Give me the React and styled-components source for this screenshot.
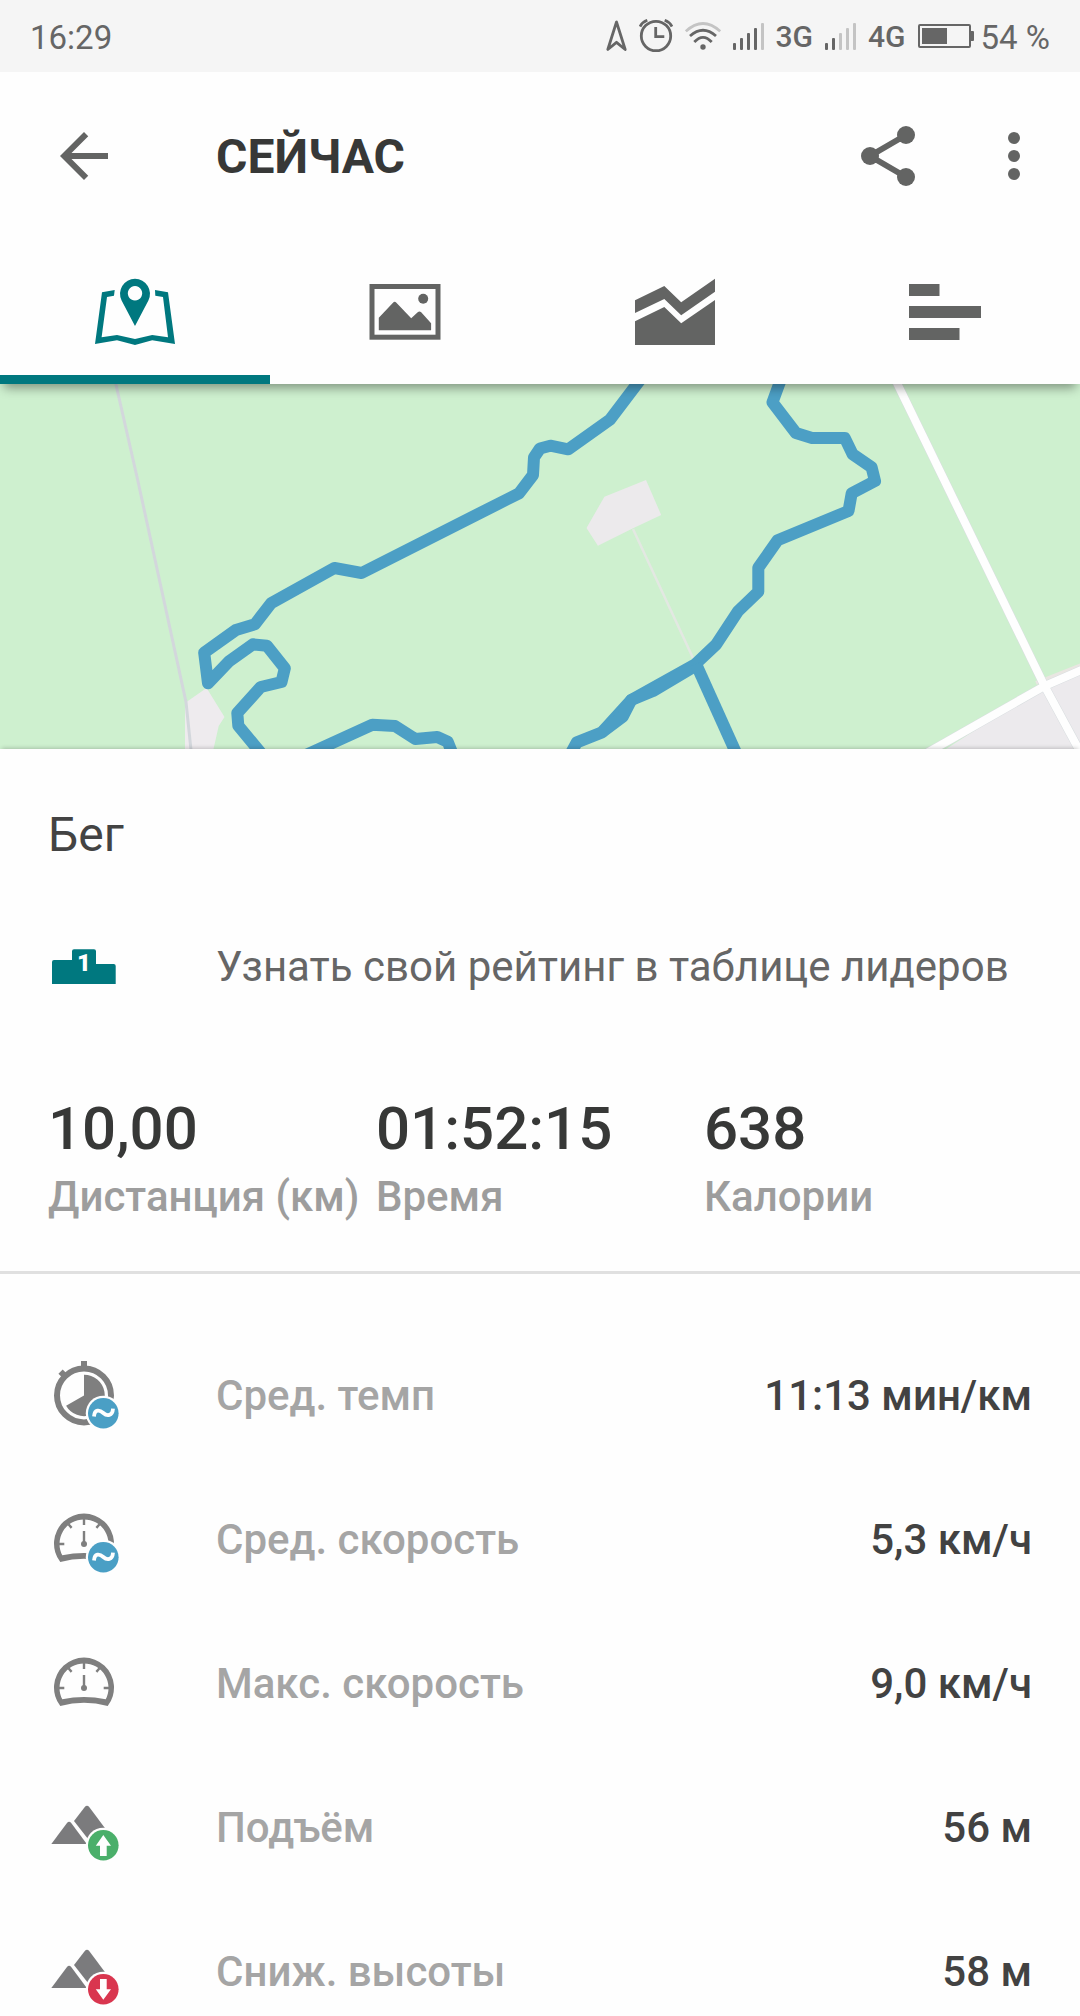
import React, { useState } from "react";
import styled, { createGlobalStyle } from "styled-components";

const GlobalStyle = createGlobalStyle`
  * {
    box-sizing: border-box;
  }

  body {
    margin: 0;
    background: #fefefe;
    font-family: Roboto, "Noto Sans", sans-serif;
  }
`;

const Screen = styled.div`
  display: flex;
  flex-direction: column;
  height: 100vh;
  overflow: hidden;
`;

const StatusBar = styled.div`
  display: flex;
  flex: none;
  align-items: center;
  justify-content: space-between;
  height: 72px;
  padding: 0 30px;
  background: #f5f5f5;
  color: #666;
`;

const StatusGroup = styled.div`
  display: flex;
  align-items: center;
  gap: ${(props) => props.$gap || 12}px;
`;

const StatusText = styled.span`
  padding-top: 4px;
  font-size: 33px;
  line-height: 40px;
  white-space: nowrap;
`;

const Network = styled.span`
  padding-top: 2px;
  font-size: 30px;
  font-weight: 500;
  line-height: 40px;
`;

const Header = styled.header`
  position: relative;
  z-index: 1;
  flex: none;
  background: #fefefe;
  box-shadow: 0 8px 10px -4px rgba(0, 0, 0, 0.38);
`;

const AppBar = styled.div`
  display: flex;
  align-items: center;
  height: 168px;
  padding: 0 30px 0 48px;
`;

const IconButton = styled.button`
  display: flex;
  padding: 0;
  border: 0;
  background: none;
  color: #636463;
  cursor: pointer;
`;

const Title = styled.h1`
  flex: 1;
  margin: 0 0 0 96px;
  padding-top: 2px;
  color: #373837;
  font-size: 48px;
  font-weight: 700;
  line-height: 60px;
  text-transform: uppercase;
`;

const Actions = styled.div`
  display: flex;
  gap: 54px;
`;

const Tabs = styled.div`
  display: grid;
  grid-template-columns: repeat(4, 1fr);
`;

const Tab = styled.button`
  display: flex;
  align-items: center;
  justify-content: center;
  height: 144px;
  padding: 9px 0 0;
  border: 0;
  border-bottom: 9px solid ${(props) => (props.$active ? "#00787f" : "transparent")};
  background: none;
  color: ${(props) => (props.$active ? "#00787f" : "#636463")};
  cursor: pointer;
`;

const Content = styled.main`
  flex: 1;
  min-height: 0;
  overflow-y: auto;
  scrollbar-width: none;
`;

const MapView = styled.svg`
  display: block;
  width: 100%;
  height: 365px;
  background: #cef0cf;
`;

const Summary = styled.section`
  position: relative;
  border-bottom: 3px solid #e0e0e0;
  background: #fefefe;
  box-shadow: 0 -3px 4px -2px rgba(0, 0, 0, 0.2);
`;

const Activity = styled.h2`
  margin: 0;
  padding: 56px 48px 29px;
  color: #434343;
  font-size: 48px;
  font-weight: 400;
  line-height: 60px;
`;

const Leaderboard = styled.a`
  display: flex;
  align-items: center;
  gap: 96px;
  height: 144px;
  padding: 2px 48px 0;
  color: #666;
  font-size: 42px;
  line-height: 50px;
  text-decoration: none;
  white-space: nowrap;
`;

const Totals = styled.dl`
  display: grid;
  grid-template-columns: repeat(3, 1fr);
  margin: 0;
  padding: 55px 48px 49px;
`;

const Total = styled.div`
  display: flex;
  flex-direction: column-reverse;
  gap: 7px;
  white-space: nowrap;
`;

const TotalLabel = styled.dt`
  color: #9d9d9d;
  font-size: 42px;
  font-weight: 500;
  line-height: 50px;
`;

const TotalValue = styled.dd`
  margin: 0;
  color: #373837;
  font-size: 60px;
  font-weight: 500;
  line-height: 72px;
`;

const Metrics = styled.dl`
  margin: 0;
  padding: 50px 0 0;
`;

const Metric = styled.div`
  display: flex;
  align-items: center;
  height: 144px;
  padding: 0 48px;
  font-size: 42px;
  font-weight: 500;
  line-height: 50px;
`;

const MetricLabel = styled.dt`
  display: flex;
  flex: 1;
  align-items: center;
  gap: 96px;
  color: #a5a5a5;
`;

const MetricValue = styled.dd`
  margin: 0;
  color: #424242;
`;

const NavigationIcon = () => (
  <svg width="21" height="32" viewBox="0 0 21 32" fill="none" stroke="currentColor" strokeWidth="2.8" strokeLinejoin="round">
    <path d="M10.5 2 L1.8 29.5 L10.5 22.3 L19.2 29.5 Z" />
  </svg>
);

const AlarmIcon = () => (
  <svg width="34" height="34" viewBox="0 0 34 34" fill="none" stroke="currentColor" strokeWidth="2.8">
    <circle cx="17" cy="17" r="14.7" />
    <path d="M16.7 8 V17.7 H25.3" />
    <path d="M1 7.5 Q3.5 3 8.3 1.3" />
    <path d="M33 7.5 Q30.5 3 25.7 1.3" />
  </svg>
);

const WifiIcon = () => (
  <svg width="36" height="36" viewBox="0 0 36 36" fill="none" stroke="currentColor" strokeWidth="2.8">
    <path d="M0.8 13.3 Q18 -2.4 35.2 13.3" stroke="#c4c4c4" />
    <path d="M5 18 Q18 6.4 31 18" />
    <path d="M9.3 24 Q18 14.6 26.7 24" />
    <circle cx="18" cy="29" r="2.7" fill="currentColor" stroke="none" />
  </svg>
);

const SignalIcon = ({ level }) => (
  <svg width="31" height="28" viewBox="0 0 31 28">
    {[0, 1, 2, 3, 4].map((bar) => (
      <rect
        key={bar}
        x={bar * 7}
        y={21 - bar * 5}
        width="3"
        height={7 + bar * 5}
        rx="1"
        fill={bar < level ? "currentColor" : "#c4c4c4"}
      />
    ))}
  </svg>
);

const BatteryIcon = () => (
  <svg width="56" height="24" viewBox="0 0 56 24">
    <rect x="1" y="1" width="51" height="22" rx="1" fill="none" stroke="currentColor" strokeWidth="2" />
    <rect x="4" y="4" width="25" height="16" fill="currentColor" />
    <path d="M53 7 h2 q1 0 1 1 v8 q0 1 -1 1 h-2 Z" fill="currentColor" />
  </svg>
);

const BackIcon = () => (
  <svg width="72" height="72" viewBox="0 0 24 24" fill="currentColor">
    <path d="M20 11H7.83l5.59-5.59L12 4l-8 8 8 8 1.41-1.41L7.83 13H20v-2z" />
  </svg>
);

const ShareIcon = () => (
  <svg width="72" height="72" viewBox="0 0 24 24" fill="currentColor">
    <path d="M18 5 L6 12 L18 19" fill="none" stroke="currentColor" strokeWidth="2" />
    <circle cx="18" cy="5" r="3" />
    <circle cx="6" cy="12" r="3" />
    <circle cx="18" cy="19" r="3" />
  </svg>
);

const MoreIcon = () => (
  <svg width="72" height="72" viewBox="0 0 24 24" fill="currentColor">
    <circle cx="12" cy="6" r="2" />
    <circle cx="12" cy="12" r="2" />
    <circle cx="12" cy="18" r="2" />
  </svg>
);

const MapIcon = () => (
  <svg width="80" height="80" viewBox="0 0 80 80" fill="currentColor">
    <path d="M0 72 L7 20.3 L19.7 18 L19 23.7 L12 25 L6.6 65.3 L22 63 L40 67 L57.2 63 L73 65.3 L68 25 L60.3 23.7 L60 18 L73 20.3 L80 72 L57.2 68.3 L40 73 L22 68.3 Z" />
    <path
      fillRule="evenodd"
      d="M40 54 L26.6 28.5 A15 15 0 1 1 53.4 28.5 Z M40 14.1 a7.2 7.2 0 1 0 0.01 0 Z"
    />
  </svg>
);

const PhotoIcon = () => (
  <svg width="80" height="80" viewBox="0 0 80 80" fill="currentColor">
    <rect x="7" y="14.5" width="66" height="50.7" fill="none" stroke="currentColor" strokeWidth="5" />
    <path d="M13.8 58.3 V45.7 L28 30.7 Q29.6 29 31.4 30.7 L46.2 46.3 L52.7 40.3 Q54.4 38.7 56.2 40.3 L66.1 51.3 V58.3 Z" />
    <circle cx="58.2" cy="26.8" r="5" />
  </svg>
);

const ChartIcon = () => (
  <svg width="80" height="80" viewBox="0 0 80 80" fill="currentColor">
    <path d="M0 28.3 L29.3 14 L46.2 30.3 L80 6.7 V19.7 L46.2 43.3 L29.3 27 L0 41 Z" />
    <path d="M0 49.3 L29.3 35 L46.2 51.3 L80 28 V73 H0 Z" />
  </svg>
);

const SplitsIcon = () => (
  <svg width="80" height="80" viewBox="0 0 80 80" fill="currentColor">
    <rect x="4" y="12" width="30.5" height="12" />
    <rect x="4" y="34" width="72" height="12" />
    <rect x="4" y="56" width="50.5" height="12" />
  </svg>
);

const PodiumIcon = () => (
  <svg width="72" height="72" viewBox="0 0 72 72">
    <path
      d="M4 53 V31 Q4 29 6 29 H24 V20.3 Q24 18.3 26 18.3 H46 Q48 18.3 48 20.3 V33 H65.7 Q67.7 33 67.7 35 V53 Z"
      fill="#00787f"
    />
    <text x="36" y="40" fill="#fefefe" fontSize="24" fontWeight="900" textAnchor="middle">
      1
    </text>
  </svg>
);

const Badge = ({ color, children }) => (
  <g>
    <circle cx="55.3" cy="53.2" r="17.5" fill="#fefefe" />
    <circle cx="55.3" cy="53.2" r="15.3" fill={color} />
    {children}
  </g>
);

const AverageBadge = () => (
  <Badge color="#4a9fc5">
    <path
      d="M46 56.5 C46.5 49 51.5 49.5 55.3 53 C59 56.4 64.5 56.2 65 48.6"
      fill="none"
      stroke="#fefefe"
      strokeWidth="3.8"
    />
  </Badge>
);

const PaceIcon = () => (
  <svg width="72" height="72" viewBox="0 0 72 72" fill="#7f7f7f">
    <rect x="33" y="1" width="6" height="8" />
    <rect x="11.7" y="10.8" width="6" height="6" transform="rotate(-45 14.7 13.8)" />
    <circle cx="36" cy="35.4" r="27" fill="none" stroke="#7f7f7f" strokeWidth="6" />
    <path d="M36 35.4 V14.7 A20.7 20.7 0 1 1 18.1 45.7 Z" />
    <AverageBadge />
  </svg>
);

const SpeedIcon = ({ average }) => (
  <svg width="72" height="72" viewBox="0 0 72 72" fill="#7f7f7f">
    <path
      fillRule="evenodd"
      d="M12.3 58 A30 30 0 1 1 59.7 58 Q36 51.4 12.3 58 Z M14.3 51.3 Q36 46.7 57.7 51.3 A24.5 24.5 0 1 0 14.3 51.3 Z"
    />
    <path
      d="M11 40 H16.3 M55.7 40 H61 M36 15 V21 M20.5 20.3 L23.6 23.9 M51.5 20.3 L48.4 23.9 M36 27 V40"
      stroke="#7f7f7f"
      strokeWidth="2.4"
    />
    <circle cx="36" cy="40" r="3" />
    {average && <AverageBadge />}
  </svg>
);

const Mountains = () => (
  <g fill="#7b7b7d">
    <path d="M3.3 52 L19 31 Q21 28.6 23.2 31 L38.8 52 Z" />
    <path d="M26 29 L36.8 15 Q39 12.6 41.2 15 L58 37.5 L42 49.5 Z" />
  </g>
);

const AscentIcon = () => (
  <svg width="72" height="72" viewBox="0 0 72 72">
    <Mountains />
    <Badge color="#4aaf6a">
      <path d="M55.3 43 L63 53.7 H58.7 V64 H52 V53.7 H47.8 Z" fill="#fefefe" />
    </Badge>
  </svg>
);

const DescentIcon = () => (
  <svg width="72" height="72" viewBox="0 0 72 72">
    <Mountains />
    <Badge color="#d9364f">
      <path d="M55.3 63.8 L63 53.2 H58.7 V43 H52 V53.2 H47.8 Z" fill="#fefefe" />
    </Badge>
  </svg>
);

const RouteMap = () => (
  <MapView viewBox="0 0 1080 365" preserveAspectRatio="xMidYMid slice" role="img" aria-label="Маршрут">
    <path d="M206.6 304 L224.5 333 L218.7 342 L213.5 365 H185 V319 Z" fill="#eeebee" />
    <path d="M115.4 -2 L137.7 96 L186 318 L191 366" fill="none" stroke="#d3d7dc" strokeWidth="3" />
    <path d="M586.5 144 L604.4 112.7 L646 96 L661.2 131 L633 144.3 L597.9 161.7 Z" fill="#eceaec" />
    <path d="M633 145 L693 274" stroke="#e3e8e2" strokeWidth="2.5" />

    <path d="M935 372 L1044 302 L1084 286 V372 Z" fill="#eceaed" />
    <path d="M1036 299 L1084 280" stroke="#e9e6e2" strokeWidth="4" />
    <g fill="none" stroke="#d9dee0" strokeWidth="9">
      <path d="M896 -3 L1044.5 302 L1090 386" />
      <path d="M918 374 L1044.5 302 L1084 285" />
    </g>
    <g fill="none" stroke="#fefefe" strokeWidth="8">
      <path d="M896 -3 L1044.5 302 L1090 386" />
      <path d="M918 374 L1044.5 302 L1084 285" />
    </g>

    <g fill="none" stroke="#4c9fc5" strokeWidth="12" strokeLinejoin="round">
      <path d="M640 -4 L610 35.7 L568.2 65.3 L550.3 61.7 L540 64.5 L534 73.3 L533 91 L519 109.3 L361.6 189 L334.4 184 L271 219.3 L254.8 240.3 L235.9 246 L204.2 268.7 L208 299.3 L229 277.3 L252.8 260.3 L266.9 261.7 L284.8 284.3 L281.5 298 L260.7 303 L237.3 329 L238.3 341.7 L261.7 370" />
      <path d="M306 371 L372.3 340.7 L395 342 L415.3 355 L437.3 353 L447.7 357.7 L453 371" />
      <path d="M781 -5 L772.5 18.3 L795.9 49 L812 54 H844.8 L852.7 70.3 L871.6 83.3 L875 97 L851.7 109.3 L848.5 127 L777.6 156.3 L758.3 183.7 V207.7 L738 227.3 L716.3 260.3 L695 280.5 L631.3 316 L602 348.3 L576.8 358.3 L570 371" />
      <path d="M695 282 L653 307 L631.3 316 L622.7 332.7 L602 348.3" />
      <path d="M696 280 L737 371" />
    </g>
  </MapView>
);

const TABS = [
  { id: "map", label: "Карта", Icon: MapIcon },
  { id: "photos", label: "Фото", Icon: PhotoIcon },
  { id: "charts", label: "Графики", Icon: ChartIcon },
  { id: "splits", label: "Отрезки", Icon: SplitsIcon },
];

const TOTALS = [
  { label: "Дистанция (км)", value: "10,00" },
  { label: "Время", value: "01:52:15" },
  { label: "Калории", value: "638" },
];

const METRICS = [
  { label: "Сред. темп", value: "11:13 мин/км", icon: <PaceIcon /> },
  { label: "Сред. скорость", value: "5,3 км/ч", icon: <SpeedIcon average /> },
  { label: "Макс. скорость", value: "9,0 км/ч", icon: <SpeedIcon /> },
  { label: "Подъём", value: "56 м", icon: <AscentIcon /> },
  { label: "Сниж. высоты", value: "58 м", icon: <DescentIcon /> },
];

const App = () => {
  const [activeTab, setActiveTab] = useState("map");

  return (
    <Screen>
      <GlobalStyle />
      <StatusBar>
        <StatusText>16:29</StatusText>
        <StatusGroup>
          <NavigationIcon />
          <AlarmIcon />
          <WifiIcon />
          <SignalIcon level={4} />
          <Network>3G</Network>
          <SignalIcon level={2} />
          <Network>4G</Network>
          <StatusGroup $gap={7}>
            <BatteryIcon />
            <StatusText>54 %</StatusText>
          </StatusGroup>
        </StatusGroup>
      </StatusBar>

      <Header>
        <AppBar>
          <IconButton aria-label="Назад">
            <BackIcon />
          </IconButton>
          <Title>Сейчас</Title>
          <Actions>
            <IconButton aria-label="Поделиться">
              <ShareIcon />
            </IconButton>
            <IconButton aria-label="Ещё">
              <MoreIcon />
            </IconButton>
          </Actions>
        </AppBar>
        <Tabs role="tablist">
          {TABS.map(({ id, label, Icon }) => (
            <Tab
              key={id}
              role="tab"
              aria-label={label}
              aria-selected={id === activeTab}
              $active={id === activeTab}
              onClick={() => setActiveTab(id)}
            >
              <Icon />
            </Tab>
          ))}
        </Tabs>
      </Header>

      <Content>
        <RouteMap />
        <Summary>
          <Activity>Бег</Activity>
          <Leaderboard href="#leaderboard">
            <PodiumIcon />
            Узнать свой рейтинг в таблице лидеров
          </Leaderboard>
          <Totals>
            {TOTALS.map(({ label, value }) => (
              <Total key={label}>
                <TotalLabel>{label}</TotalLabel>
                <TotalValue>{value}</TotalValue>
              </Total>
            ))}
          </Totals>
        </Summary>
        <Metrics>
          {METRICS.map(({ label, value, icon }) => (
            <Metric key={label}>
              <MetricLabel>
                {icon}
                {label}
              </MetricLabel>
              <MetricValue>{value}</MetricValue>
            </Metric>
          ))}
        </Metrics>
      </Content>
    </Screen>
  );
};

export default App;
